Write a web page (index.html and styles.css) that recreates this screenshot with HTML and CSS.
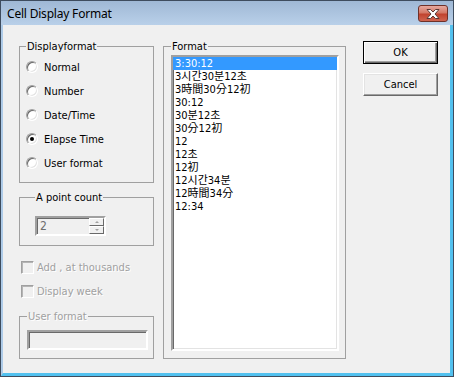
FILE: index.html
```html
<!DOCTYPE html>
<html>
<head>
<meta charset="utf-8">
<link rel="stylesheet" href="styles.css">
</head>
<body>
<div class="window">
  <div class="titlebar">
    <span class="title">Cell Display Format</span>
    <span class="close">
      <svg width="14" height="10" viewBox="0 0 14 10"><path d="M1 0.5 H4.5 L7 3 L9.5 0.5 H13 L9 5 L13 9.5 H9.5 L7 7 L4.5 9.5 H1 L5 5 Z" fill="#fff" stroke="#5a3a36" stroke-width="1" stroke-linejoin="round"/></svg>
    </span>
  </div>
  <div class="client">
    <div class="col-left">
      <fieldset class="group g-display">
        <legend>Displayformat</legend>
        <div class="opt"><span class="radio"></span>Normal</div>
        <div class="opt"><span class="radio"></span>Number</div>
        <div class="opt"><span class="radio"></span>Date/Time</div>
        <div class="opt"><span class="radio checked"></span>Elapse Time</div>
        <div class="opt"><span class="radio"></span>User format</div>
      </fieldset>
      <fieldset class="group g-point">
        <legend>A point count</legend>
        <div class="spin">
          <span class="spin-val">2</span>
          <span class="spin-btns">
            <span class="sb"><span class="arrow up"></span></span>
            <span class="sb"><span class="arrow down"></span></span>
          </span>
        </div>
      </fieldset>
      <div class="checks">
        <div class="chk"><span class="box"></span>Add , at thousands</div>
        <div class="chk"><span class="box"></span>Display week</div>
      </div>
      <fieldset class="group g-user">
        <legend class="dim">User format</legend>
        <div class="edit"></div>
      </fieldset>
    </div>
    <fieldset class="group g-format">
      <legend>Format</legend>
      <ul class="list">
        <li class="sel">3:30:12</li>
        <li>3시간30분12초</li>
        <li>3時間30分12初</li>
        <li>30:12</li>
        <li>30분12초</li>
        <li>30分12初</li>
        <li>12</li>
        <li>12초</li>
        <li>12初</li>
        <li>12시간34분</li>
        <li>12時間34分</li>
        <li>12:34</li>
      </ul>
    </fieldset>
    <div class="buttons">
      <button class="btn default">OK</button>
      <button class="btn">Cancel</button>
    </div>
  </div>
</div>
</body>
</html>
```

FILE: styles.css
```css
html, body {
  margin: 0;
  padding: 0;
}
body {
  width: 454px;
  height: 377px;
  overflow: hidden;
  background: #f0f0f0;
  font-family: "DejaVu Sans Condensed", "DejaVu Sans", sans-serif;
  font-size: 11px;
  color: #000;
}
.window {
  box-sizing: border-box;
  width: 454px;
  height: 377px;
  border: 1px solid #3e4c5e;
  display: flex;
  flex-direction: column;
  background: #bcd3eb;
}
.titlebar {
  height: 24px;
  flex: none;
  display: flex;
  align-items: flex-start;
  background: linear-gradient(#9fb8d5, #b9d0e9);
}
.title {
  font-family: "Noto Sans", "Open Sans", sans-serif;
  font-size: 12px;
  line-height: 16px;
  margin: 5px 0 0 6px;
  letter-spacing: -0.2px;
  color: #000;
}
.close {
  margin: 4px 5px 0 auto;
  box-sizing: border-box;
  width: 30px;
  height: 17px;
  border: 1px solid #6e3129;
  border-radius: 3px;
  background: linear-gradient(#e6a99f 0%, #d47866 45%, #c1432f 55%, #cf6450 100%);
  display: flex;
  align-items: center;
  justify-content: center;
}
.close svg { display: block; }
.client {
  flex: 1;
  display: flex;
  align-items: flex-start;
  background: #f0f0f0;
  border-left: 2px solid #aecbe8;
  border-right: 3px solid #52c1ef;
  border-bottom: 3px solid #52c1ef;
  padding: 15px 12px 0 16px;
}
.col-left {
  width: 135px;
  display: flex;
  flex-direction: column;
}
.group {
  margin: 0;
  border: 1px solid #a0a0a0;
  box-sizing: border-box;
  min-width: 0;
}
.group legend {
  padding: 0 1px;
  line-height: 13px;
  height: 13px;
}
.group legend.dim {
  color: #a0a0a0;
  text-shadow: 1px 1px 0 #fff;
}
.g-display {
  width: 135px;
  padding: 2px 6px 7px 6px;
}
.opt {
  height: 24px;
  display: flex;
  align-items: center;
}
.radio {
  box-sizing: border-box;
  width: 12px;
  height: 12px;
  border-radius: 50%;
  border: 1px solid;
  border-color: #a0a0a0 #fff #fff #a0a0a0;
  background: #fff;
  box-shadow: inset 1px 1px 0 #696969, inset -1px -1px 0 #e3e3e3;
  margin-right: 6px;
  position: relative;
  flex: none;
}
.radio.checked::after {
  content: "";
  position: absolute;
  left: 3px;
  top: 3px;
  width: 4px;
  height: 4px;
  border-radius: 50%;
  background: #000;
}
.g-point {
  width: 135px;
  margin-top: 8px;
  padding: 12px 8px 9px 15px;
}
.spin {
  box-sizing: border-box;
  width: 71px;
  height: 20px;
  border: 2px solid;
  border-color: #a0a0a0 #fff #fff #a0a0a0;
  box-shadow: inset 1px 1px 0 #696969;
  background: #f0f0f0;
  display: flex;
  align-items: stretch;
}
.spin-val {
  flex: 1;
  color: #6d6d6d;
  font-size: 12px;
  line-height: 15px;
  padding-left: 3px;
  padding-top: 1px;
}
.spin-btns {
  width: 15px;
  display: flex;
  flex-direction: column;
}
.sb {
  flex: 1;
  box-sizing: border-box;
  border: 1px solid;
  border-color: #fff #696969 #696969 #fff;
  background: #f0f0f0;
  display: flex;
  align-items: center;
  justify-content: center;
}
.arrow {
  width: 0;
  height: 0;
  border-left: 2px solid transparent;
  border-right: 2px solid transparent;
}
.arrow.up { border-bottom: 2px solid #a0a0a0; }
.arrow.down { border-top: 2px solid #a0a0a0; }
.checks {
  margin-top: 9px;
  padding-left: 2px;
}
.chk {
  height: 24px;
  display: flex;
  align-items: center;
  color: #a0a0a0;
  text-shadow: 1px 1px 0 #fff;
}
.box {
  box-sizing: border-box;
  width: 13px;
  height: 13px;
  border: 1px solid;
  border-color: #a0a0a0 #fff #fff #a0a0a0;
  box-shadow: inset 1px 1px 0 #b5b5b5;
  background: #f0f0f0;
  margin-right: 3px;
  flex: none;
}
.g-user {
  width: 135px;
  margin-top: 7px;
  padding: 7px 5px 8px 7px;
}
.edit {
  box-sizing: border-box;
  width: 121px;
  height: 20px;
  border: 2px solid;
  border-color: #a0a0a0 #fff #fff #a0a0a0;
  box-shadow: inset 1px 1px 0 #696969;
  background: #f0f0f0;
}
.g-format {
  width: 183px;
  margin-left: 9px;
  padding: 2px 6px 7px 7px;
}
.list {
  box-sizing: border-box;
  width: 168px;
  height: 296px;
  margin: 0;
  padding: 0;
  list-style: none;
  background: #fff;
  border: 2px solid;
  border-color: #a0a0a0 #fff #fff #a0a0a0;
  box-shadow: inset 1px 1px 0 #696969, inset -1px -1px 0 #e3e3e3;
  font-family: "DejaVu Sans Condensed", "Noto Sans CJK KR", sans-serif;
  font-size: 11px;
}
.list li {
  height: 13px;
  line-height: 13px;
  padding-left: 2px;
  white-space: nowrap;
}
.list li.sel {
  background: #3399ff;
  color: #fff;
}
.buttons {
  margin-left: 17px;
  margin-top: 1px;
  display: flex;
  flex-direction: column;
  gap: 9px;
}
.btn {
  box-sizing: border-box;
  width: 75px;
  height: 23px;
  margin: 0;
  padding: 0;
  font-family: "DejaVu Sans Condensed", "DejaVu Sans", sans-serif;
  font-size: 11px;
  color: #000;
  background: #f0f0f0;
  border: 1px solid;
  border-color: #fff #696969 #696969 #fff;
  box-shadow: inset -1px -1px 0 #a0a0a0, inset 1px 1px 0 #e3e3e3;
}
.btn.default {
  border: 1px solid #000;
  box-shadow: inset 1px 1px 0 #fff, inset -1px -1px 0 #696969, inset -2px -2px 0 #a0a0a0;
}
```
